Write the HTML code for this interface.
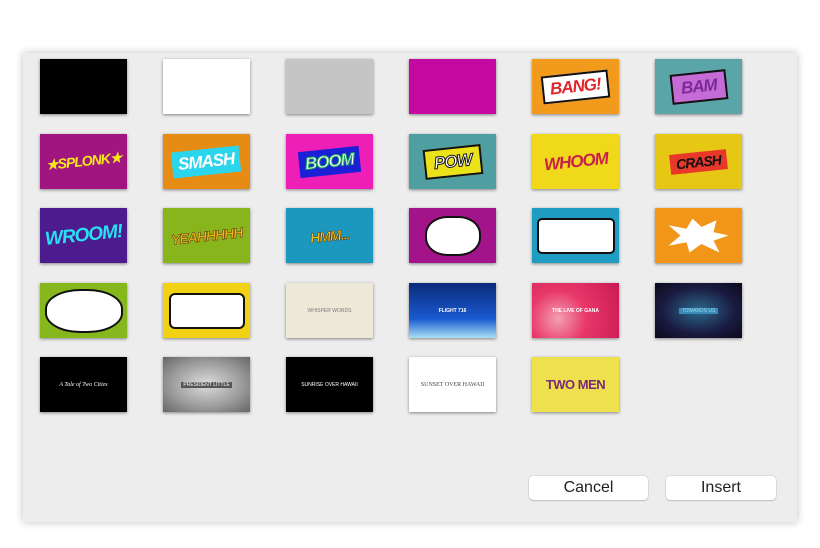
<!DOCTYPE html><html><head><style>
body{margin:0;width:820px;height:548px;background:#fff;position:relative;overflow:hidden;font-family:"Liberation Sans",sans-serif}
.p{position:absolute;left:23px;top:53px;width:774px;height:469px;background:#ededed;box-shadow:0 0 8px rgba(0,0,0,.25)}
.t{position:absolute;width:87px;height:55px;box-shadow:0 1px 3px rgba(0,0,0,.45);overflow:hidden;display:flex;align-items:center;justify-content:center;text-align:center}
.c{font-weight:bold;font-style:italic;font-size:17px;letter-spacing:-1px;transform:rotate(-6deg)}
.b{position:absolute;height:24px;top:476px;background:#fff;border-radius:4px;box-shadow:0 0 1px rgba(0,0,0,.4),0 1px 1px rgba(0,0,0,.15);font-size:16px;color:#222;text-align:center;line-height:24px}
.bub{background:#fff;border:2px solid #111;border-radius:40%/45%}
</style></head><body>
<div class="p"></div>
<div class="t" style="left:40px;top:59px;background:#000"></div>
<div class="t" style="left:163px;top:59px;background:#fff"></div>
<div class="t" style="left:286px;top:59px;background:#c5c5c5"></div>
<div class="t" style="left:409px;top:59px;background:#c5089f"></div>
<div class="t" style="left:532px;top:59px;background:#f29a1c"><span class="c" style="color:#e0242a;background:#fff;padding:2px 6px;border:2px solid #111">BANG!</span></div>
<div class="t" style="left:655px;top:59px;background:#5aa5a8"><span class="c" style="color:#7b2a98;background:#c56bd6;padding:3px 8px;border:2px solid #111">BAM</span></div>
<div class="t" style="left:40px;top:134px;background:#a0157f"><span class="c" style="color:#f4e81a;font-size:14px">★SPLONK★</span></div>
<div class="t" style="left:163px;top:134px;background:#e68c14"><span class="c" style="color:#fff;background:#2bd5ec;padding:3px 6px">SMASH</span></div>
<div class="t" style="left:286px;top:134px;background:#ee1fb6"><span class="c" style="color:#fff;background:#1b1fd6;padding:3px 6px;-webkit-text-stroke:1px #19a858">BOOM</span></div>
<div class="t" style="left:409px;top:134px;background:#4f9ea2"><span class="c" style="color:#fff;background:#ece21a;padding:3px 8px;border:2px solid #111;-webkit-text-stroke:1px #111">POW</span></div>
<div class="t" style="left:532px;top:134px;background:#f0d81a"><span class="c" style="color:#c8204a">WHOOM</span></div>
<div class="t" style="left:655px;top:134px;background:#e6c814"><span class="c" style="color:#111;background:#e8382a;padding:2px 6px;font-size:14px">CRASH</span></div>
<div class="t" style="left:40px;top:208px;background:#4c1c8e"><span class="c" style="color:#28e0f2;font-size:19px">WROOM!</span></div>
<div class="t" style="left:163px;top:208px;background:#88b51c"><span class="c" style="color:#f0b818;font-size:14px;-webkit-text-stroke:.5px #5a3010">YEAHHHHH</span></div>
<div class="t" style="left:286px;top:208px;background:#1c98be"><span class="c" style="color:#f2c818;font-size:14px;-webkit-text-stroke:.5px #5a3010">HMM...</span></div>
<div class="t" style="left:409px;top:208px;background:#a3148a"><div class="bub" style="width:52px;height:36px"></div></div>
<div class="t" style="left:532px;top:208px;background:#1e9cc2"><div style="width:74px;height:32px;background:#fff;border:2px solid #111;border-radius:5px"></div></div>
<div class="t" style="left:655px;top:208px;background:#f2961a"><div style="width:60px;height:34px;background:#fff;clip-path:polygon(0 20%,30% 30%,40% 0,55% 25%,80% 5%,75% 40%,100% 50%,75% 65%,85% 100%,55% 75%,35% 100%,30% 70%,0 80%,20% 50%)"></div></div>
<div class="t" style="left:40px;top:283px;background:#86b81e"><div style="width:74px;height:40px;background:#fff;border:2px solid #111;border-radius:45%"></div></div>
<div class="t" style="left:163px;top:283px;background:#f2d014"><div style="width:72px;height:32px;background:#fff;border:2px solid #111;border-radius:6px"></div></div>
<div class="t" style="left:286px;top:283px;background:#eee8d8"><span style="font-size:5px;color:#777">WHISPER WORDS</span></div>
<div class="t" style="left:409px;top:283px;background:linear-gradient(#0a2a7a,#1a5ad0 65%,#a8e0f6)"><span style="font-size:5px;color:#fff;font-weight:bold">FLIGHT 716</span></div>
<div class="t" style="left:532px;top:283px;background:radial-gradient(circle at 30% 65%,#f4a0b0,#e8386a 40%,#c81a52)"><span style="font-size:5px;color:#fff;font-weight:bold">THE LIVE OF GANA</span></div>
<div class="t" style="left:655px;top:283px;background:radial-gradient(ellipse at 50% 50%,#2a6a8a,#1a1a40 60%,#0a0a1a)"><span style="font-size:5px;color:#9de;background:#3a8ab8;padding:0 3px">TOWARDS US</span></div>
<div class="t" style="left:40px;top:357px;background:#000"><span style="font-size:6px;color:#fff;font-family:'Liberation Serif',serif;font-style:italic">A Tale of Two Cities</span></div>
<div class="t" style="left:163px;top:357px;background:radial-gradient(#ddd,#999 60%,#666)"><span style="font-size:5px;color:#fff;background:#555;padding:0 2px">PRESIDENT LITTLE</span></div>
<div class="t" style="left:286px;top:357px;background:#000"><span style="font-size:5px;color:#fff">SUNRISE OVER HAWAII</span></div>
<div class="t" style="left:409px;top:357px;background:#fff"><span style="font-size:6px;color:#444;font-family:'Liberation Serif',serif">SUNSET OVER HAWAII</span></div>
<div class="t" style="left:532px;top:357px;background:#efe04e"><span style="font-size:13px;color:#7a2a7a;font-weight:bold;letter-spacing:-.5px">TWO MEN</span></div>
<div class="b" style="left:529px;width:119px">Cancel</div>
<div class="b" style="left:666px;width:110px">Insert</div>
</body></html>
